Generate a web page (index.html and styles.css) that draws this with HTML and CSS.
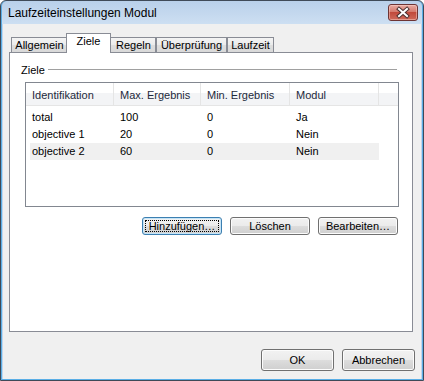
FILE: index.html
```html
<!DOCTYPE html>
<html lang="de">
<head>
  <meta charset="UTF-8" />
  <title>Laufzeiteinstellungen Modul</title>
  <link rel="stylesheet" href="styles.css">
</head>
<body>
  <div class="window">
    <div class="titlebar">
      <span class="title">Laufzeiteinstellungen Modul</span>
      <button class="close" aria-label="Schließen">
        <svg width="30" height="17" viewBox="0 0 30 17">
          <path d="M11 5 L19 12 M19 5 L11 12" stroke="#4a3030" stroke-width="4" stroke-linecap="square" fill="none"/>
          <path d="M11 5 L19 12 M19 5 L11 12" stroke="#ffffff" stroke-width="2" stroke-linecap="square" fill="none"/>
        </svg>
      </button>
    </div>

    <div class="client">
      <div class="tabs">
        <div class="tab t-allgemein">Allgemein</div>
        <div class="tab active t-ziele">Ziele</div>
        <div class="tab t-regeln">Regeln</div>
        <div class="tab t-pruefung">Überprüfung</div>
        <div class="tab t-laufzeit">Laufzeit</div>
      </div>

      <div class="panel">
        <div class="group">
          <span class="group-label">Ziele</span>
          <div class="group-line"></div>
        </div>

        <div class="list">
          <div class="list-head">
            <div class="hcol c1">Identifikation</div>
            <div class="hcol c2">Max. Ergebnis</div>
            <div class="hcol c3">Min. Ergebnis</div>
            <div class="hcol c4">Modul</div>
            <div class="hcol filler"></div>
          </div>
          <div class="rows">
            <div class="row">
              <div class="cell c1">total</div>
              <div class="cell c2">100</div>
              <div class="cell c3">0</div>
              <div class="cell c4">Ja</div>
            </div>
            <div class="row">
              <div class="cell c1">objective 1</div>
              <div class="cell c2">20</div>
              <div class="cell c3">0</div>
              <div class="cell c4">Nein</div>
            </div>
            <div class="row selected">
              <div class="cell c1">objective 2</div>
              <div class="cell c2">60</div>
              <div class="cell c3">0</div>
              <div class="cell c4">Nein</div>
            </div>
          </div>
        </div>

        <div class="actions">
          <button class="btn default">Hinzufügen…</button>
          <button class="btn">Löschen</button>
          <button class="btn">Bearbeiten…</button>
        </div>
      </div>

      <div class="footer">
        <button class="btn big">OK</button>
        <button class="btn big">Abbrechen</button>
      </div>
    </div>
  </div>
</body>
</html>
```

FILE: styles.css
```css
body {
  margin: 0;
  background: #ffffff;
  font-family: 'Liberation Sans', Arial, sans-serif;
  font-size: 11px;
  color: #000;
}

.window {
  width: 424px;
  height: 381px;
  box-sizing: border-box;
  border: 1px solid #3f4a58;
  border-radius: 6px 6px 0 0;
  padding: 0 2px 1px 1px;
  display: flex;
  flex-direction: column;
  background: linear-gradient(#b9d0ea, #cddff2 23px, #c2d7ee 23px);
  box-shadow: inset 1px 0 #5aaee6, inset -1px 0 #5aaee6, inset 0 -1px #5aaee6;
}

/* title bar */
.titlebar {
  height: 23px;
  display: flex;
  align-items: center;
  flex-shrink: 0;
}

.title {
  font-size: 12px;
  padding-left: 6px;
  color: #000;
  margin-top: 1px;
}

.close {
  margin-left: auto;
  margin-right: 3px;
  align-self: flex-start;
  margin-top: 3px;
  width: 30px;
  height: 17px;
  padding: 0;
  border: 1px solid #6d3434;
  border-radius: 3px;
  background: linear-gradient(#e9aba2, #d47a6e 45%, #c14a3c 50%, #cf6a5b);
  display: flex;
  align-items: center;
  justify-content: center;
  box-shadow: inset 0 0 0 1px rgba(255, 220, 210, 0.45);
}
.close svg {
  display: block;
  margin: -1px;
}

/* client area */
.client {
  flex: 1;
  background: #f0f0f0;
  margin-left: 1px;
  padding: 9px 0 0 6px;
  display: flex;
  flex-direction: column;
}

.tabs {
  height: 20px;
  margin-left: 2px;
  margin-bottom: -1px;
  display: flex;
  align-items: flex-end;
  position: relative;
  z-index: 1;
}

.tab {
  box-sizing: border-box;
  height: 15px;
  margin-bottom: 1px;
  border: 1px solid #898c95;
  border-bottom: none;
  background: linear-gradient(#f4f4f4, #ebebeb 50%, #dedede 50%, #d9d9d9);
  text-align: center;
  line-height: 14px;
  white-space: nowrap;
}
.tab.active {
  height: 20px;
  margin: 0 -2px;
  background: #fff;
  line-height: 15px;
  position: relative;
  z-index: 2;
}

.t-allgemein { width: 57px; }
.t-ziele { width: 45px; }
.t-regeln { width: 47px; padding-left: 2px; }
.t-pruefung { width: 71px; }
.t-laufzeit { width: 47px; }

.panel {
  box-sizing: border-box;
  width: 404px;
  height: 280px;
  border: 1px solid #898c95;
  background: #fff;
  display: flex;
  flex-direction: column;
}

.group {
  display: flex;
  align-items: center;
  height: 13px;
  margin: 10px 15px 0 11px;
}
.group-label {
  margin-right: 2px;
}
.group-line {
  flex: 1;
  height: 1px;
  background: #a0a0a0;
  margin-left: 1px;
}

/* list view */
.list {
  box-sizing: border-box;
  width: 374px;
  height: 125px;
  margin: 6px 0 0 15px;
  border: 1px solid #828790;
  background: #fff;
}

.list-head {
  display: flex;
  height: 23px;
  box-sizing: border-box;
  border-bottom: 1px solid #e5e5e5;
  background: linear-gradient(#ffffff 0, #ffffff 10px, #f3f4f6 10px, #f3f4f6);
  color: #1e2a3c;
}
.hcol {
  box-sizing: border-box;
  border-right: 1px solid #e5e5e5;
  padding: 2px 0 0 6px;
  line-height: 20px;
}
.hcol.filler {
  flex: 1;
  border-right: none;
}

.c1 { width: 88px; }
.c2 { width: 87px; }
.c3 { width: 89px; }
.c4 { width: 89px; }

.rows {
  padding-top: 3px;
}
.row {
  display: flex;
  height: 17px;
  line-height: 17px;
  margin-left: 4px;
  width: 349px;
}
.row.selected {
  background: #f0f0f0;
}
.cell {
  box-sizing: border-box;
  padding-left: 6px;
  white-space: nowrap;
}
.row .c1 {
  width: 84px;
  padding-left: 2px;
}

.actions {
  display: flex;
  justify-content: flex-end;
  gap: 8px;
  margin: 10px 14px 0 0;
}

/* buttons */
.btn {
  box-sizing: border-box;
  width: 80px;
  height: 18px;
  padding: 0;
  font-family: 'Liberation Sans', Arial, sans-serif;
  font-size: 11px;
  color: #000;
  border: 1px solid #707070;
  border-radius: 3px;
  background: linear-gradient(#f2f2f2, #ebebeb 50%, #dddddd 50%, #cfcfcf);
  box-shadow: inset 0 0 0 1px #fcfcfc;
}
.btn.default {
  border-color: #3c7fb1;
  box-shadow: inset 0 0 0 1px #c5e4f7;
  outline: 1px dotted #000;
  outline-offset: -4px;
}
.btn.big {
  width: 73px;
  height: 22px;
}

.footer {
  display: flex;
  justify-content: flex-end;
  gap: 8px;
  margin: 17px 6px 0 0;
}
```
